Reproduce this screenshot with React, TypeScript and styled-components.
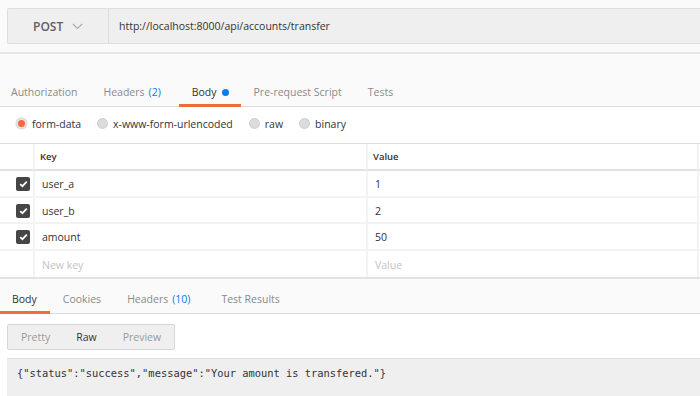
import React from "react";
import styled, { createGlobalStyle } from "styled-components";

const Global = createGlobalStyle`
  html, body { margin: 0; padding: 0; background: #ffffff; }
  body { font-family: "Open Sans", "Noto Sans", sans-serif; color: #505050; overflow: hidden; }
  * { box-sizing: border-box; }
`;

const Page = styled.div`
  width: 700px;
  height: 396px;
  display: flex;
  flex-direction: column;
  overflow: hidden;
`;

const RequestBar = styled.div`
  background: #fafafa;
  padding: 8px 0 0 7px;
  height: 54px;
  border-bottom: 2px solid #e6e6e6;
`;

const UrlBox = styled.div`
  height: 36px;
  display: flex;
  align-items: stretch;
  background: #efefef;
  border: 1px solid #dedede;
  border-right: none;
  border-radius: 2px 0 0 2px;
`;

const Method = styled.div`
  width: 101px;
  display: flex;
  align-items: center;
  padding-left: 25px;
  gap: 9px;
  border-right: 1px solid #dcdcdc;
  font-size: 12px;
  font-weight: 600;
  color: #606060;
`;

const Url = styled.div`
  display: flex;
  align-items: center;
  padding-left: 10px;
  font-size: 10.5px;
  color: #333;
`;

const TabsBar = styled.div<{ $short?: boolean }>`
  display: flex;
  background: #fafafa;
  border-bottom: 1px solid #dcdcdc;
  height: ${(p) => (p.$short ? 31 : 53)}px;
  align-items: flex-end;
`;

const Tab = styled.div<{ $active?: boolean; $pl?: number; $pr?: number }>`
  height: 32px;
  display: flex;
  align-items: center;
  gap: 4px;
  padding: 5px ${(p) => p.$pr ?? 13}px 0 ${(p) => p.$pl ?? 13}px;
  font-size: 10.5px;
  color: ${(p) => (p.$active ? "#333" : "#8a8a8a")};
  border-bottom: 3px solid ${(p) => (p.$active ? "#f26b3a" : "transparent")};
  margin-bottom: -1px;
`;

const Count = styled.span`
  color: #097bed;
`;

const Dot = styled.span`
  width: 7px;
  height: 7px;
  border-radius: 50%;
  background: #097bed;
  margin-left: 1px;
`;

const RadioRow = styled.div`
  height: 37px;
  display: flex;
  align-items: center;
  padding: 0 0 3px 16px;
  border-bottom: 1px solid #dcdcdc;
`;

const RadioItem = styled.label`
  display: flex;
  align-items: center;
  gap: 5px;
  margin-right: 16px;
  font-size: 10.5px;
  color: #333;
`;

const RadioDot = styled.span<{ $on?: boolean }>`
  width: 11px;
  height: 11px;
  border-radius: 50%;
  background: ${(p) => (p.$on ? "#f26b3a" : "#dcdcdc")};
  border: ${(p) => (p.$on ? "2px solid #e4e4e4" : "1px solid #cfcfcf")};
  box-shadow: ${(p) => (p.$on ? "0 0 0 0.5px #cfcfcf" : "none")};
`;

const Table = styled.div`
  display: grid;
  grid-template-columns: 33px 333px 331px 3px;
  border-bottom: 2px solid #e2e2e2;
`;

const Cell = styled.div<{ $head?: boolean; $muted?: boolean; $first?: boolean }>`
  height: ${(p) => (p.$head ? 27 : 26.5)}px;
  display: flex;
  align-items: center;
  padding-top: ${(p) => (p.$head ? 0 : 2)}px;
  padding-left: ${(p) => (p.$first ? 16 : p.$head ? 5 : 7)}px;
  border-bottom: ${(p) => (p.$head ? "2px solid #e2e2e2" : "2px solid #f3f3f3")};
  border-left: ${(p) => (p.$first ? "none" : "2px solid #f3f3f3")};
  font-size: ${(p) => (p.$head ? 9.5 : 10.5)}px;
  font-weight: ${(p) => (p.$head ? 600 : 400)};
  color: ${(p) => (p.$muted ? "#c4c4c4" : "#333")};
  &:nth-last-child(-n + 4) { border-bottom: none; }
`;

const Check = styled.span`
  width: 14px;
  height: 14px;
  border-radius: 2px;
  background: #464646;
  display: flex;
  align-items: center;
  justify-content: center;
`;

const Spacer = styled.div`
  height: 4px;
  background: #fafafa;
`;

const ResponseBody = styled.div`
  padding: 10px 0 0 7px;
  display: flex;
  flex-direction: column;
  gap: 8px;
  background: #fff;
  flex: 1;
`;

const Segmented = styled.div`
  width: 168px;
  height: 26px;
  display: flex;
  align-items: center;
  background: #efefef;
  border: 1px solid #d6d6d6;
  border-radius: 2px;
  padding-left: 13px;
`;

const Seg = styled.span<{ $active?: boolean }>`
  font-size: 10.5px;
  margin-right: 26px;
  color: ${(p) => (p.$active ? "#333" : "#9a9a9a")};
`;

const Code = styled.div`
  flex: 1;
  background: #efefef;
  border-top: 1px solid #dedede;
  padding: 8px 0 0 10px;
  font-family: "DejaVu Sans Mono", "Liberation Mono", monospace;
  font-size: 10.4px;
  color: #333;
`;

const rows = [
  { k: "user_a", v: "1" },
  { k: "user_b", v: "2" },
  { k: "amount", v: "50" },
];

const CheckIcon = () => (
  <svg width="9" height="8" viewBox="0 0 9 8">
    <path d="M1.2 4.2 L3.4 6.2 L7.8 1.6" fill="none" stroke="#fff" strokeWidth="1.7" />
  </svg>
);

export default function App() {
  return (
    <Page>
      <Global />
      <RequestBar>
        <UrlBox>
          <Method>
            POST
            <svg width="11" height="7" viewBox="0 0 11 7">
              <path d="M1 1 L5.5 5.5 L10 1" fill="none" stroke="#aaa" strokeWidth="1.1" />
            </svg>
          </Method>
          <Url>http://localhost:8000/api/accounts/transfer</Url>
        </UrlBox>
      </RequestBar>
      <TabsBar>
        <Tab $pl={11}>Authorization</Tab>
        <Tab $pr={18}>
          Headers <Count>(2)</Count>
        </Tab>
        <Tab $active $pr={12}>
          Body <Dot />
        </Tab>
        <Tab>Pre-request Script</Tab>
        <Tab>Tests</Tab>
      </TabsBar>
      <RadioRow>
        <RadioItem>
          <RadioDot $on />
          form-data
        </RadioItem>
        <RadioItem>
          <RadioDot />
          x-www-form-urlencoded
        </RadioItem>
        <RadioItem>
          <RadioDot />
          raw
        </RadioItem>
        <RadioItem>
          <RadioDot />
          binary
        </RadioItem>
      </RadioRow>
      <Table>
        <Cell $head $first />
        <Cell $head>Key</Cell>
        <Cell $head>Value</Cell>
        <Cell $head />
        {rows.map((r) => (
          <React.Fragment key={r.k}>
            <Cell $first>
              <Check>
                <CheckIcon />
              </Check>
            </Cell>
            <Cell>{r.k}</Cell>
            <Cell>{r.v}</Cell>
            <Cell />
          </React.Fragment>
        ))}
        <Cell $first />
        <Cell $muted>New key</Cell>
        <Cell $muted>Value</Cell>
        <Cell />
      </Table>
      <Spacer />
      <TabsBar $short>
        <Tab $active $pl={12}>Body</Tab>
        <Tab>Cookies</Tab>
        <Tab $pr={18}>
          Headers <Count>(10)</Count>
        </Tab>
        <Tab>Test Results</Tab>
      </TabsBar>
      <ResponseBody>
        <Segmented>
          <Seg>Pretty</Seg>
          <Seg $active>Raw</Seg>
          <Seg>Preview</Seg>
        </Segmented>
        <Code>{`{"status":"success","message":"Your amount is transfered."}`}</Code>
      </ResponseBody>
    </Page>
  );
}
